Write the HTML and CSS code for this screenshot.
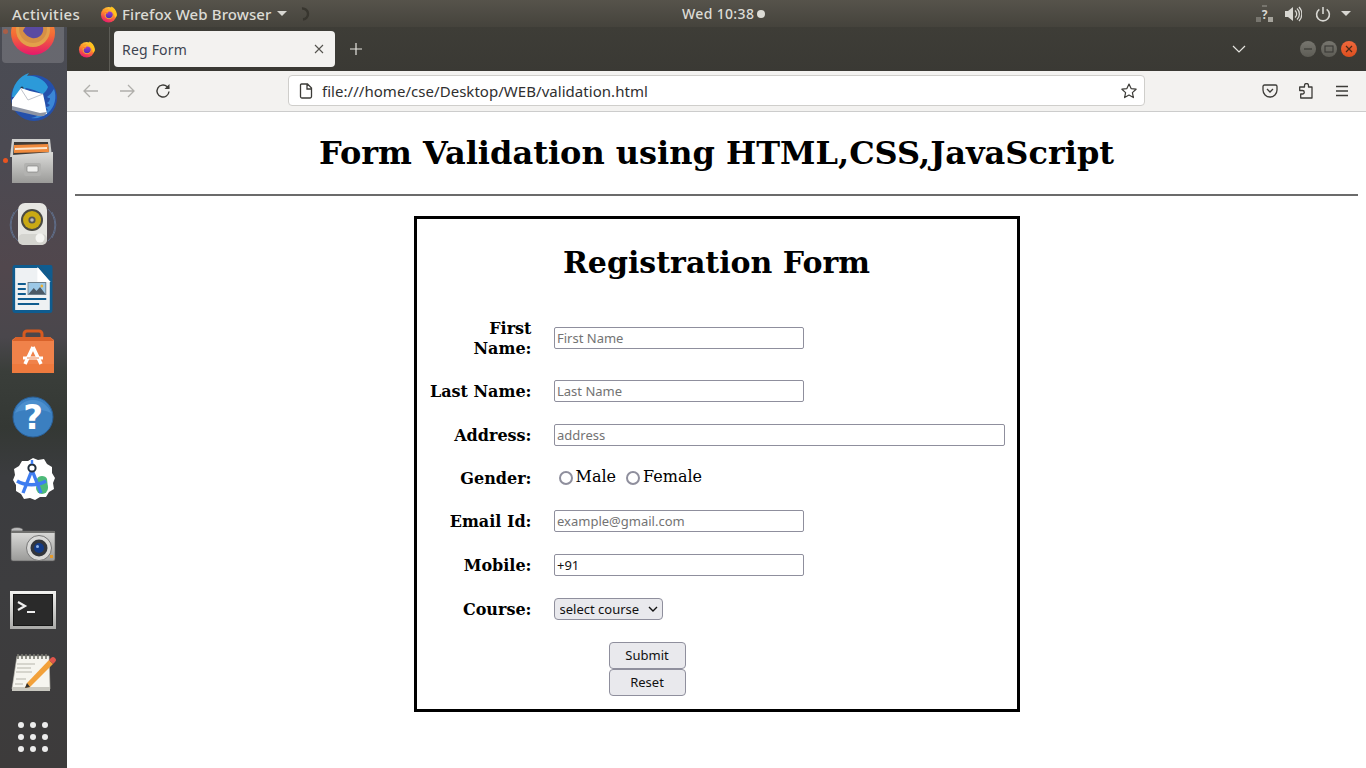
FILE: index.html
```html
<!DOCTYPE html>
<html lang="en">
<head>
<meta charset="utf-8">
<title>Reg Form</title>
<link rel="stylesheet" href="styles.css">
</head>
<body>
<svg class="defs" width="0" height="0" aria-hidden="true">
  <defs>
    <linearGradient id="fxOuter" x1="0.7" y1="0" x2="0.3" y2="1">
      <stop offset="0" stop-color="#ffd43a"/><stop offset="0.45" stop-color="#ff8a2b"/><stop offset="1" stop-color="#e8136f"/>
    </linearGradient>
    <linearGradient id="fxDock" x1="0.5" y1="0" x2="0.5" y2="1">
      <stop offset="0" stop-color="#f9a13a"/><stop offset="0.55" stop-color="#f46a35"/><stop offset="1" stop-color="#e6176c"/>
    </linearGradient>
    <linearGradient id="fxInner" x1="0.5" y1="0" x2="0.5" y2="1">
      <stop offset="0" stop-color="#a43cd0"/><stop offset="1" stop-color="#4b2fb0"/>
    </linearGradient>
    <linearGradient id="metal" x1="0" y1="0" x2="0" y2="1">
      <stop offset="0" stop-color="#dcdcda"/><stop offset="1" stop-color="#9a9a98"/>
    </linearGradient>
    <linearGradient id="termFrame" x1="0" y1="0" x2="0" y2="1">
      <stop offset="0" stop-color="#f2f2f0"/><stop offset="1" stop-color="#a9a9a7"/>
    </linearGradient>
    <symbol id="firefox" viewBox="0 0 48 48">
      <circle cx="23" cy="26" r="20.5" fill="url(#fxOuter)"/>
      <path d="M30 4c7 3 14 10 15 20 1 6-2 9-5 9-2-9-6-15-13-19 2-3 3-6 3-10z" fill="#ffc21f"/>
      <path d="M9 10c2 0 4 1 5 3 3-2 7-2 9-1-4 2-7 6-7 8-4 1-7-4-7-10z" fill="#ff9a2b"/>
      <circle cx="24" cy="26" r="11.5" fill="#ffb02a"/>
      <path d="M15 27c0-6 5-10 10-10 6 0 9 4 9 9 0 6-5 9-10 9-5 0-9-3-9-8z" fill="url(#fxInner)"/>
      <path d="M12 17c3 2 7 2 11 1l-4 5c-3 0-6-2-7-6z" fill="#ff7a2b"/>
    </symbol>
  </defs>
</svg>

<header class="topbar">
  <div class="top-left">
    <span class="activities">Activities</span>
    <span class="app-menu">
      <svg class="app-icon" width="18" height="18"><use href="#firefox"/></svg>
      <span class="app-name">Firefox Web Browser</span>
      <span class="caret"></span>
      <svg class="spinner" width="14" height="14" viewBox="0 0 14 14"><path d="M6 1.500a5.500 5.500 0 0 1 1 11" fill="none" stroke="#38362f" stroke-width="2.400"/></svg>
    </span>
  </div>
  <div class="clock"><span>Wed 10:38</span><span class="clock-dot"></span></div>
  <div class="top-right">
    <svg class="tray-net" width="18" height="18" viewBox="0 0 18 18">
      <rect x="6" y="0" width="5" height="2" fill="#77756e"/>
      <rect x="0" y="12" width="5" height="5" fill="#77756e"/>
      <rect x="12" y="12" width="5" height="5" fill="#a5a39b"/>
      <text x="8.600" y="14" class="tray-q">?</text>
    </svg>
    <svg class="tray-vol" width="18" height="16" viewBox="0 0 18 16">
      <path d="M1 5h3l5-4v14l-5-4H1z" fill="#d8d7d2"/>
      <path d="M11 4.500a4.500 4.500 0 0 1 0 7M13 2.500a7.500 7.500 0 0 1 0 11M15 1a10 10 0 0 1 0 14" fill="none" stroke="#d8d7d2" stroke-width="1.300"/>
    </svg>
    <svg class="tray-pow" width="16" height="16" viewBox="0 0 16 16">
      <path d="M8 1v7M4.300 3.300a6.400 6.400 0 1 0 7.400 0" fill="none" stroke="#d8d7d2" stroke-width="1.600"/>
    </svg>
    <span class="caret tray-caret"></span>
  </div>
</header>

<div class="desktop">
  <nav class="dock">
    <div class="dock-item dock-first running-dim">
      <div class="dock-active"></div>
      <svg class="dock-svg" width="48" height="48" viewBox="0 0 48 48">
        <circle cx="24" cy="24" r="22" fill="url(#fxDock)"/>
        <circle cx="24" cy="21" r="17" fill="#e3a04a"/>
        <circle cx="24" cy="20" r="14" fill="#d68f45"/>
        <path d="M14 22c2-5 6-8 12-9 6-1 9 4 8 9-1 5-6 8-11 7-4-1-6-3-9-7z" fill="#5a4aa2"/>
      </svg>
    </div>
    <div class="dock-item">
      <svg class="dock-svg" width="48" height="48" viewBox="0 0 48 48">
        <circle cx="25" cy="25" r="23" fill="#2450ab"/>
        <path d="M45 16c3 8 1 18-6 24-5 4-11 6-17 5 6-1 10-4 13-8 1 1 3 1 4 0-1-1-2-2-2-3 2 0 3-1 4-2-1-1-2-1-3-2 2-1 3-3 3-5-1 0-2 0-3-1 3-2 5-5 7-8z" fill="#3b87d6"/>
        <path d="M3 24C3 13 10 3 20 0l-2 3c8-1 17 3 21 11-1 3-3 5-5 7-6-3-11-5-17-6l-12 9z" fill="#2c9ad9"/>
        <circle cx="13" cy="15" r="1.600" fill="#243a52"/>
        <path d="M3 27l9-12 9 3 13 3 2 9 1 6 1 5-7 1-28-7z" fill="#fff"/>
        <path d="M12 16l7 11 15-6" fill="none" stroke="#bfc3cb" stroke-width="1"/>
        <path d="M3 33l28 7 7-1-3 4-6 0-26-6z" fill="#8d94a3"/>
      </svg>
    </div>
    <div class="dock-item running">
      <svg class="dock-svg" width="48" height="48" viewBox="0 0 48 48">
        <path d="M3 2h38l2 18H1z" fill="#cfcfcd"/>
        <path d="M5 5h34l1 14H4z" fill="#3f3a36"/>
        <path d="M5 8l34-1 1 8-35 1z" fill="#f08a3c"/>
        <path d="M6 11l32-1v2l-32 1z" fill="#fbe6cf"/>
        <path d="M3 18l41-3v31H3z" fill="url(#metal)"/>
        <rect x="15" y="26" width="17" height="13" rx="2" fill="#b2b2b0"/>
        <rect x="18" y="29" width="11" height="6" rx="1" fill="#f0f0ee" stroke="#777" stroke-width="0.600"/>
      </svg>
    </div>
    <div class="dock-item">
      <svg class="dock-svg" width="48" height="48" viewBox="0 0 48 48">
        <path d="M9 8a22 22 0 0 0 0 32M39 8a22 22 0 0 1 0 32M5 11a24 24 0 0 0 0 26M43 11a24 24 0 0 1 0 26" fill="none" stroke="#5f6d88" stroke-width="1"/>
        <rect x="9" y="2" width="29" height="42" rx="7" fill="#e6e6e2"/>
        <rect x="9" y="33" width="29" height="11" rx="5" fill="#d4d4cf"/>
        <circle cx="23" cy="19" r="11" fill="#4a4a44"/>
        <circle cx="23" cy="19" r="9" fill="#c9a914"/>
        <circle cx="23" cy="19" r="3.600" fill="#555"/>
        <circle cx="23" cy="19" r="1.800" fill="#bbb"/>
        <circle cx="31" cy="37" r="4.500" fill="#f5f5f2"/>
      </svg>
    </div>
    <div class="dock-item">
      <svg class="dock-svg" width="48" height="48" viewBox="0 0 48 48">
        <g transform="translate(0.800 0) scale(.889 1)">
          <path d="M6 0h27l15 15v30a3 3 0 0 1-3 3H6a3 3 0 0 1-3-3V3a3 3 0 0 1 3-3z" fill="#0f5c8f"/>
          <path d="M6 3h26l13 14v28H6z" fill="#eef1f3"/>
          <path d="M33 0h13a2 2 0 0 1 2 2v13z" fill="#0f5c8f"/>
          <path d="M31 2l15 15H31z" fill="#fff"/>
          <rect x="9" y="18" width="9" height="2" fill="#0f5c8f"/>
          <rect x="9" y="23" width="9" height="2" fill="#0f5c8f"/>
          <rect x="9" y="28" width="9" height="2" fill="#0f5c8f"/>
          <rect x="9" y="33" width="32" height="2" fill="#0f5c8f"/>
          <rect x="9" y="38" width="24" height="2" fill="#0f5c8f"/>
          <rect x="20" y="17" width="21" height="13" fill="#6d7f8b"/>
          <rect x="21" y="18" width="19" height="11" fill="#9cc8e6"/>
          <path d="M21 29l6-6 3 3 4-4 6 7z" fill="#4c5a66"/>
          <circle cx="36" cy="21" r="1.500" fill="#f0b030"/>
        </g>
      </svg>
    </div>
    <div class="dock-item">
      <svg class="dock-svg" width="48" height="48" viewBox="0 0 48 48">
        <path d="M15 9V5a3 3 0 0 1 3-3h12a3 3 0 0 1 3 3v4" fill="none" stroke="#d65a1f" stroke-width="3"/>
        <path d="M7 8h34l4 3v33H3V11z" fill="#f0824a"/>
        <path d="M3 35h42v9H3z" fill="#ee7a3e"/>
        <path d="M7 8h34l4 4H3z" fill="#d9622a"/>
        <path d="M24 18l-8 17M24 18l8 17" stroke="#fff" stroke-width="3.500" fill="none"/>
        <path d="M14 29h20" stroke="#fff" stroke-width="3"/>
        <path d="M18 29h12" stroke="#f0824a" stroke-width="1"/>
      </svg>
    </div>
    <div class="dock-item">
      <svg class="dock-svg" width="48" height="48" viewBox="0 0 48 48">
        <circle cx="24" cy="24" r="20" fill="#3b7fc0" stroke="#2a5f96" stroke-width="1"/>
        <path d="M6 20a19 19 0 0 1 36 0c-10-5-26-5-36 0z" fill="#4c8fcd"/>
        <text x="24" y="36" class="help-q">?</text>
      </svg>
    </div>
    <div class="dock-item">
      <svg class="dock-svg" width="48" height="48" viewBox="0 0 48 48">
        <path d="M24 1l5 2 6-1 3 5 5 3 0 6 3 5-2 5 1 6-5 3-3 5-6 0-5 3-5-2-6 1-3-5-5-3 0-6-3-5 2-5-1-6 5-3 3-5 6 0z" fill="#fff"/>
        <path d="M28 22c1-4 9-4 10 0l1 9H28z" fill="#4dba78"/>
        <circle cx="33" cy="31" r="6" fill="#4dba78"/>
        <path d="M23 13l-9 23M23 13l9 23" stroke="#3f7df0" stroke-width="3.400" fill="none"/>
        <path d="M8 24c8 5 21 5 29 0" stroke="#3f7df0" stroke-width="3.400" fill="none"/>
        <circle cx="23" cy="11" r="3.600" fill="#fff" stroke="#222f3d" stroke-width="2"/>
        <path d="M23 3v4" stroke="#3f7df0" stroke-width="2.400"/>
      </svg>
    </div>
    <div class="dock-item">
      <svg class="dock-svg" width="48" height="48" viewBox="0 0 48 48">
        <ellipse cx="8" cy="9" rx="6" ry="2.500" fill="#bbb" stroke="#555" stroke-width="0.600"/>
        <rect x="2" y="10" width="44" height="30" rx="2" fill="url(#metal)" stroke="#555" stroke-width="0.600"/>
        <rect x="2" y="10" width="44" height="2" fill="#6f6f6d"/>
        <circle cx="30" cy="27" r="12.500" fill="#d9d9d7" stroke="#777" stroke-width="1"/>
        <circle cx="30" cy="27" r="8.500" fill="#33363c"/>
        <circle cx="30" cy="27" r="5" fill="#123a86"/>
        <circle cx="28.500" cy="25.500" r="1.500" fill="#8fb2e6"/>
        <rect x="41" y="34" width="3" height="3" fill="#e59a2c"/>
      </svg>
    </div>
    <div class="dock-item">
      <svg class="dock-svg" width="48" height="48" viewBox="0 0 48 48">
        <rect x="1" y="6" width="46" height="38" fill="url(#termFrame)"/>
        <rect x="4" y="9" width="40" height="32" fill="#161616"/>
        <rect x="5" y="10" width="38" height="30" fill="#2a2a2a"/>
        <path d="M9 17l7 4-7 4" fill="none" stroke="#eee" stroke-width="2.200"/>
        <rect x="18" y="26" width="8" height="2" fill="#eee"/>
      </svg>
    </div>
    <div class="dock-item">
      <svg class="dock-svg" width="48" height="48" viewBox="0 0 48 48">
        <path d="M8 7h32l1 33H3z" fill="#f6f5ef" stroke="#bdbcb4" stroke-width="0.600"/>
        <path d="M3 38h38v4H3z" fill="#c9c8c0"/>
        <path d="M9 5v5M13 5v5M17 5v5M21 5v5M25 5v5M29 5v5M33 5v5M37 5v5" stroke="#77776f" stroke-width="1.600"/>
        <path d="M8 15h18M8 19h14M7 23h16M7 30h10M6 35h8" stroke="#b5b5ac" stroke-width="1.200"/>
        <path d="M18 34l22-23 4 4-23 23-5 1z" fill="#f2a13a"/>
        <path d="M40 11l2-2a2.500 2.500 0 0 1 4 4l-2 2z" fill="#e0564c"/>
        <path d="M18 34l-2 5 5-1z" fill="#333"/>
      </svg>
    </div>
    <div class="dock-item dock-grid">
      <span></span><span></span><span></span>
      <span></span><span></span><span></span>
      <span></span><span></span><span></span>
    </div>
  </nav>

  <main class="browser">
    <div class="tabbar">
      <div class="tab-favicon"><svg width="18" height="18"><use href="#firefox"/></svg></div>
      <div class="tab">
        <span class="tab-title">Reg Form</span>
        <svg width="10" height="10" viewBox="0 0 10 10"><path d="M1 1l8 8M9 1l-8 8" stroke="#55534e" stroke-width="1.100"/></svg>
      </div>
      <svg class="newtab" width="12" height="12" viewBox="0 0 12 12"><path d="M6 0v12M0 6h12" stroke="#e6e5e0" stroke-width="1.200"/></svg>
      <svg class="tab-list" width="14" height="8" viewBox="0 0 14 8"><path d="M1 1l6 6 6-6" fill="none" stroke="#e6e5e0" stroke-width="1.200"/></svg>
      <div class="winbtns">
        <span class="winbtn"><svg width="10" height="10" viewBox="0 0 10 10"><path d="M1 5h8" stroke="#3a3935" stroke-width="1.200"/></svg></span>
        <span class="winbtn"><svg width="10" height="10" viewBox="0 0 10 10"><rect x="1" y="2" width="8" height="6" fill="none" stroke="#3a3935" stroke-width="1.100"/></svg></span>
        <span class="winbtn winbtn-close"><svg width="10" height="10" viewBox="0 0 10 10"><path d="M2 2l6 6M8 2l-6 6" stroke="#4a2a18" stroke-width="1.200"/></svg></span>
      </div>
    </div>

    <div class="toolbar">
      <span class="tool"><svg width="16" height="14" viewBox="0 0 16 14"><path d="M15 7H1.500M7 1L1 7l6 6" fill="none" stroke="#b0afab" stroke-width="1.300"/></svg></span>
      <span class="tool"><svg width="16" height="14" viewBox="0 0 16 14"><path d="M1 7h13.500M9 1l6 6-6 6" fill="none" stroke="#b0afab" stroke-width="1.300"/></svg></span>
      <span class="tool"><svg width="16" height="16" viewBox="0 0 16 16"><path d="M14 8.500A6 6 0 1 1 12 3.500L14 5.500" fill="none" stroke="#3d3c38" stroke-width="1.400"/><path d="M14.500 1v5h-5z" fill="#3d3c38"/></svg></span>
      <div class="urlbar">
        <svg width="14" height="16" viewBox="0 0 14 16"><path d="M2.500 1h6l4 4v8.500a1.500 1.500 0 0 1-1.500 1.500H3a1.500 1.500 0 0 1-1.500-1.500V2A1 1 0 0 1 2.500 1zM8 1.500V6h4.500" fill="none" stroke="#3d3c38" stroke-width="1.300"/></svg>
        <span class="url">file:///home/cse/Desktop/WEB/validation.html</span>
        <svg width="16" height="16" viewBox="0 0 16 16"><path d="M8 1l2.100 4.600 5 .6-3.700 3.400 1 5L8 12.100 3.600 14.600l1-5L.9 6.200l5-.6z" fill="none" stroke="#3d3c38" stroke-width="1.200" stroke-linejoin="round"/></svg>
      </div>
      <div class="tools-right">
        <span class="tool"><svg width="16" height="14" viewBox="0 0 16 14"><path d="M2.500 1h11A1.500 1.500 0 0 1 15 2.500V6a7 7 0 0 1-14 0V2.500A1.500 1.500 0 0 1 2.500 1zM5 5l3 3 3-3" fill="none" stroke="#3d3c38" stroke-width="1.300"/></svg></span>
        <span class="tool"><svg width="14" height="16" viewBox="0 0 14 16"><path d="M.7 4h4.800V2.500a2 2 0 0 1 4 0V4H13v11H1.700v-4H3.500a1.750 1.750 0 0 0 0-3.500H.7z" fill="none" stroke="#3d3c38" stroke-width="1.300" stroke-linejoin="round"/></svg></span>
        <span class="tool"><svg width="14" height="12" viewBox="0 0 14 12"><path d="M1 1.500h12M1 6h12M1 10.500h12" stroke="#3d3c38" stroke-width="1.300"/></svg></span>
      </div>
    </div>

    <div class="page">
      <h1 class="page-title">Form Validation using HTML,CSS,JavaScript</h1>
      <hr class="rule">
      <form class="reg-form">
        <h2 class="form-title">Registration Form</h2>
        <div class="fields">
          <label class="field-label">First Name:</label>
          <input class="text-input" type="text" placeholder="First Name">
          <label class="field-label">Last Name:</label>
          <input class="text-input" type="text" placeholder="Last Name">
          <label class="field-label">Address:</label>
          <input class="text-input text-input-wide" type="text" placeholder="address">
          <label class="field-label">Gender:</label>
          <div class="radios">
            <input class="radio" type="radio" name="g"><span class="radio-text">Male</span>
            <input class="radio radio-second" type="radio" name="g"><span class="radio-text">Female</span>
          </div>
          <label class="field-label">Email Id:</label>
          <input class="text-input" type="text" placeholder="example@gmail.com">
          <label class="field-label">Mobile:</label>
          <input class="text-input" type="text" value="+91">
          <label class="field-label">Course:</label>
          <div class="select-wrap">
            <select class="select"><option>select course</option></select>
            <svg class="select-arrow" width="10" height="6" viewBox="0 0 10 6"><path d="M1 1l4 4 4-4" fill="none" stroke="#111" stroke-width="1.400"/></svg>
          </div>
          <div class="actions">
            <button class="btn" type="button">Submit</button>
            <button class="btn" type="button">Reset</button>
          </div>
        </div>
      </form>
    </div>
  </main>
</div>
</body>
</html>
```

FILE: styles.css
```css
* { box-sizing: border-box; }
html, body { margin: 0; height: 768px; overflow: hidden; background: #fff; }
body { font-family: "Noto Sans", sans-serif; display: flex; flex-direction: column; }
.defs { display: block; height: 0; }

/* GNOME top bar */
.topbar {
  height: 27px; flex: none; position: relative; z-index: 2;
  display: grid; grid-template-columns: 682px auto 1fr; align-items: center;
  background: linear-gradient(#56534b, #45433c);
  color: #dcdbd5; font-size: 14px; font-weight: 500;
}
.top-left { display: flex; align-items: center; padding-left: 12px; }
.activities { width: 88px; font-size: 15px; letter-spacing: 0.35px; }
.app-menu { display: flex; align-items: center; }
.app-icon { margin-right: 4px; }
.app-name { font-size: 15px; letter-spacing: 0.1px; }
.caret { width: 0; height: 0; border: 5px solid transparent; border-top: 5px solid #d8d7d2; border-bottom: 0; margin-left: 5px; }
.spinner { margin-left: 9px; }
.clock { display: flex; align-items: center; gap: 3px; letter-spacing: 0.35px; }
.clock-dot { width: 8px; height: 8px; border-radius: 50%; background: #dcdbd5; }
.top-right { display: flex; align-items: center; justify-content: flex-end; padding-right: 15px; }
.tray-q { font: bold 12px "Noto Sans", sans-serif; fill: #d8d7d2; text-anchor: middle; }
.tray-net { margin-right: 10px; }
.tray-vol { margin-right: 13px; }
.tray-caret { margin-left: 10px; }

.desktop { flex: 1; display: flex; min-height: 0; }

/* Dock */
.dock {
  width: 67px; flex: none; overflow: hidden; position: relative;
  background: linear-gradient(#4a4c54 0, #4b4a52 120px, #51474d 240px, #4a474c 310px, #3a3e3a 345px, #343834 400px, #3b3c3f 450px, #3d3d3f 560px, #3d3b3b 741px);
}
.dock-item { height: 64px; padding-right: 1px; display: flex; align-items: center; justify-content: center; position: relative; flex: none; }
.dock-first { margin-top: -26px; }
.dock-svg { position: relative; flex: none; }
.dock-active { position: absolute; left: 2px; right: 3px; top: 0; bottom: 2px; border-radius: 4px; background: rgba(255,255,255,0.16); }
.running::before, .running-dim::before {
  content: ""; position: absolute; left: 3px; top: 29px; width: 5px; height: 5px; border-radius: 50%; background: #e95420; z-index: 1;
}
.running-dim::before { top: 28px; opacity: 0.5; }
.help-q { font: bold 34px "DejaVu Sans", sans-serif; fill: #fff; text-anchor: middle; }
.dock-grid { display: grid; grid-template-columns: repeat(3, 6px); gap: 6px; justify-content: center; align-content: center; }
.dock-grid span { width: 6px; height: 6px; border-radius: 50%; background: #ececec; }

/* Browser */
.browser { flex: 1; min-width: 0; display: flex; flex-direction: column; }
.tabbar {
  height: 44px; flex: none; display: flex; align-items: center;
  background: linear-gradient(#3e3d37, #3a3934);
}
.tab-favicon { width: 43px; height: 44px; display: flex; align-items: center; justify-content: center; padding-right: 2px; border-right: 1px solid #5d5c56; }
.tab {
  width: 221px; height: 36px; margin-left: 4px; border-radius: 4px; background: #f3f2f0;
  display: flex; align-items: center; justify-content: space-between; padding: 0 11px 0 8px;
  color: #3d4450; font-size: 14px;
}
.tab-title { letter-spacing: 0.2px; }
.newtab { margin-left: 15px; }
.tab-list { margin-left: 870px; }
.winbtns { margin-left: 54px; display: flex; gap: 4.500px; }
.winbtn {
  width: 16px; height: 16px; border-radius: 50%; background: linear-gradient(#77766f, #5d5c55);
  display: flex; align-items: center; justify-content: center;
}
.winbtn-close { background: linear-gradient(#f0683c, #dd4f1f); }

.toolbar {
  height: 41px; flex: none; display: flex; align-items: center; padding: 0 0 1px 6px;
  background: #f3f2f0; border-bottom: 1px solid #ccc;
}
.tool { width: 36px; height: 32px; display: flex; align-items: center; justify-content: center; flex: none; }
.urlbar {
  width: 857px; height: 31px; margin-left: 107px; flex: none;
  background: #fff; border: 1px solid #cfcecb; border-radius: 4px;
  display: flex; align-items: center; gap: 9px; padding: 0 7px 0 10px;
  color: #2f2f2f; font-size: 15px;
}
.url { flex: 1; letter-spacing: 0.04px; }
.tools-right { display: flex; margin-left: 107px; }

/* Page */
.page { flex: 1; min-height: 0; padding: 8px; background: #fff; font-family: "DejaVu Serif", serif; color: #000; }
.page-title { margin: 13px 0 21px; text-align: center; font-size: 32px; line-height: 40px; font-weight: 700; }
.rule { margin: 0 0 20px; height: 2px; border: 0; background: #6b6b6b; }
.reg-form { width: 606px; height: 496px; margin: 0 auto; border: 3px solid #000; padding: 0 13px; }
.form-title { margin: 24px 0 0; height: 40px; text-align: center; font-size: 30px; line-height: 40px; font-weight: 700; }
.fields { margin-top: 35px; display: grid; grid-template-columns: 102px 1fr; column-gap: 22px; row-gap: 22px; align-items: center; }
.field-label { font-size: 16px; font-weight: 700; line-height: 20px; text-align: right; transform: translateY(1px); }
.text-input {
  width: 250px; height: 22px; padding: 0 2.500px; margin: 0;
  border: 1px solid #8f8f9d; border-radius: 2px; background: #fff; color: #111;
  font: 13px "Noto Sans", sans-serif;
}
.text-input::placeholder { color: #737373; opacity: 1; }
.text-input-wide { width: 451px; }
.radios { display: flex; align-items: center; height: 20px; font-size: 16px; }
.radio-text { line-height: 18px; margin-bottom: 2px; }
.radio { appearance: none; width: 14px; height: 14px; margin: 0 3px 0 5px; border: 2px solid #8f8f9d; border-radius: 50%; background: #fff; flex: none; }
.radio-second { margin-left: 10px; }
.select-wrap { position: relative; width: 109px; height: 22px; }
.select {
  appearance: none; width: 109px; height: 22px; margin: 0; padding: 0 0 0 5px;
  border: 1px solid #8f8f9d; border-radius: 4px; background: #e9e9ed; color: #111;
  font: 13px "Noto Sans", sans-serif;
}
.select-arrow { position: absolute; right: 5px; top: 8px; pointer-events: none; }
.actions { grid-column: 2; display: flex; flex-direction: column; padding-left: 55px; }
.btn {
  width: 77px; height: 27px; margin: 0; padding: 0 0 2px;
  border: 1px solid #8f8f9d; border-radius: 4px; background: #e9e9ed; color: #111;
  font: 13px "Noto Sans", sans-serif;
}
```
